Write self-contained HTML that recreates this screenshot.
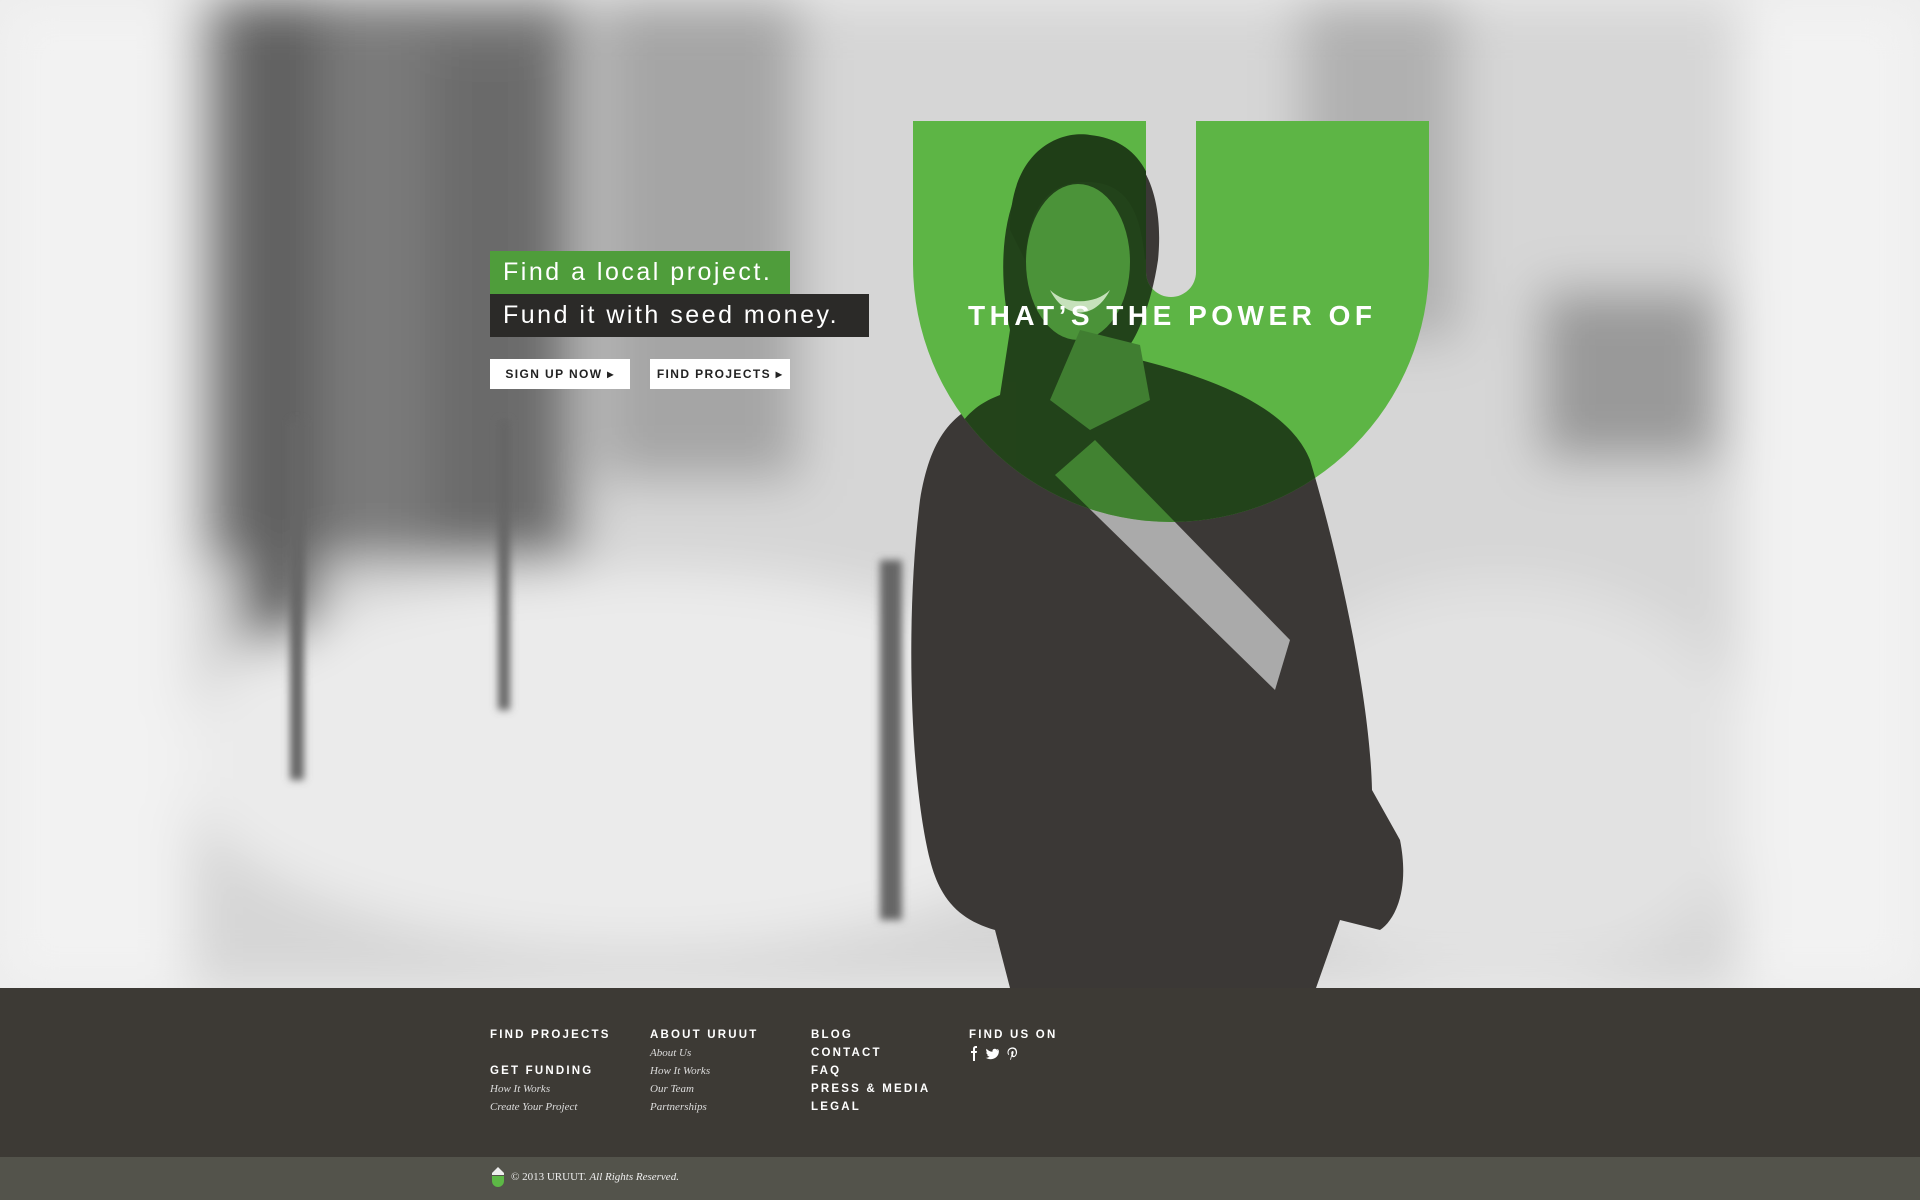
<!DOCTYPE html>
<html><head><meta charset="utf-8"><style>
*{margin:0;padding:0;box-sizing:border-box}
body{width:1920px;height:1200px;overflow:hidden;background:#3d3a35;font-family:"Liberation Sans",sans-serif;position:relative}
#hero{position:absolute;left:0;top:0;width:1920px;height:988px;background:#ececec;overflow:hidden}
.box{position:absolute;left:490px;color:#fff;font-size:25px;letter-spacing:2.5px;padding-left:13px;line-height:43px;white-space:nowrap}
.btn{position:absolute;top:359px;height:30px;background:#fff;color:#222;font-size:12px;font-weight:bold;letter-spacing:1.4px;line-height:30px;text-align:center}
.power{position:absolute;left:968px;top:300px;color:#fff;font-weight:bold;font-size:28px;letter-spacing:4.5px;white-space:nowrap}
.foot{position:absolute;top:988px;left:0;width:1920px;height:169px;background:#3d3a35}
.col{position:absolute;top:1026px;color:#fff}
.h{font-size:11.5px;font-weight:bold;letter-spacing:2.2px;line-height:18px}
.i{font-family:"Liberation Serif",serif;font-style:italic;font-size:11px;line-height:18px;color:#ddd}
.bar{position:absolute;top:1157px;left:0;width:1920px;height:43px;background:#53534b}
</style></head><body>
<div id="hero">
<svg width="1920" height="988" style="position:absolute;left:0;top:0">
<defs>
<filter id="b" x="-20%" y="-20%" width="140%" height="140%"><feGaussianBlur stdDeviation="25"/></filter>
<filter id="b2"><feGaussianBlur stdDeviation="4"/></filter>
<clipPath id="u"><path d="M913 121 L1146 121 L1146 272 A25 25 0 0 0 1196 272 L1196 121 L1429 121 L1429 264 A258 258 0 0 1 913 264 Z"/></clipPath>
</defs>
<g filter="url(#b)">
<rect x="180" y="0" width="1560" height="988" fill="#d6d6d6"/>
<rect x="200" y="0" width="380" height="560" fill="#7a7a7a"/>
<rect x="240" y="0" width="80" height="640" fill="#5e5e5e"/>
<rect x="430" y="40" width="120" height="520" fill="#6a6a6a"/>
<rect x="600" y="0" width="200" height="480" fill="#a5a5a5"/>
<rect x="1300" y="0" width="160" height="340" fill="#b0b0b0"/>
<rect x="1540" y="290" width="180" height="170" fill="#999"/>
<ellipse cx="640" cy="760" rx="460" ry="190" fill="#ebebeb"/>
<ellipse cx="1500" cy="780" rx="260" ry="200" fill="#e2e2e2"/>
<rect x="0" y="0" width="190" height="988" fill="#f2f2f2"/>
<rect x="1740" y="0" width="180" height="988" fill="#f2f2f2"/>
</g>
<g filter="url(#b2)" fill="#666">
<rect x="880" y="560" width="22" height="360"/>
<rect x="290" y="420" width="14" height="360"/>
<rect x="498" y="420" width="12" height="290"/>
</g>
<g>
<path d="M1010 330 C995 260 1000 160 1075 140 C1140 130 1165 190 1158 260 C1152 300 1140 330 1130 345 L1140 360 C1220 380 1290 410 1310 460 C1340 560 1370 700 1372 790 L1400 840 C1410 890 1395 920 1380 930 L1340 920 L1316 988 L1010 988 L995 930 C960 920 940 900 930 860 C910 780 905 620 920 500 C930 440 950 410 1000 395 Z" fill="#3b3836"/>
<path d="M1055 475 L1095 440 L1290 640 L1275 690 Z" fill="#aaa"/>
</g>
<g clip-path="url(#u)">
<rect x="900" y="100" width="540" height="440" fill="#5db545"/>
<g opacity="0.92">
<path d="M1010 330 C995 260 1000 160 1075 140 C1140 130 1165 190 1158 260 C1152 300 1140 330 1130 345 L1140 360 C1220 380 1290 410 1310 460 C1340 560 1370 700 1372 790 L1000 790 C960 700 930 600 940 500 C945 440 960 410 1000 395 Z" fill="#1e3a17"/>
<ellipse cx="1078" cy="262" rx="52" ry="78" fill="#4a9138"/>
<path d="M1080 330 L1140 345 L1150 400 L1090 430 L1050 400 Z" fill="#3e7a30"/>
<path d="M1010 230 C1010 150 1060 130 1090 135 C1140 140 1160 180 1158 240 L1145 260 C1140 200 1120 180 1080 182 C1040 185 1028 220 1025 260 Z" fill="#1a3414"/>
<path d="M1050 290 C1065 320 1095 320 1110 290 C1095 305 1065 305 1050 290Z" fill="#cfe5c6"/>
<path d="M1055 475 L1095 440 L1290 640 L1275 690 Z" fill="#3f7e30"/>
</g>
</g>
</svg>
<div class="box" style="top:251px;width:300px;height:43px;background:#4f9d3b">Find a local project.</div>
<div class="box" style="top:294px;width:379px;height:43px;background:#2b2a28">Fund it with seed money.</div>
<div class="btn" style="left:490px;width:140px">SIGN UP NOW ▸</div>
<div class="btn" style="left:650px;width:140px">FIND PROJECTS ▸</div>
<div class="power">THAT’S THE POWER OF</div>
</div>
<div class="foot"></div>
<div class="col" style="left:490px"><div class="h">FIND PROJECTS</div><div style="height:18px"></div><div class="h">GET FUNDING</div><div class="i">How It Works</div><div class="i">Create Your Project</div></div>
<div class="col" style="left:650px"><div class="h">ABOUT URUUT</div><div class="i">About Us</div><div class="i">How It Works</div><div class="i">Our Team</div><div class="i">Partnerships</div></div>
<div class="col" style="left:811px"><div class="h">BLOG</div><div class="h">CONTACT</div><div class="h">FAQ</div><div class="h">PRESS &amp; MEDIA</div><div class="h">LEGAL</div></div>
<div class="col" style="left:969px"><div class="h">FIND US ON</div>
<svg width="60" height="18" style="display:block;margin-top:1px" fill="#fff">
<path d="M4 16 V8 H2 V6 H4 V4 C4 2 5 1 7 1 H8 V3 H7 C6.3 3 6 3.3 6 4 V6 H8 L7.7 8 H6 V16 Z"/>
<path d="M30 5 C29.4 5.3 28.8 5.4 28.2 5.5 C28.8 5.1 29.3 4.5 29.5 3.9 C28.9 4.2 28.3 4.5 27.6 4.6 C26.4 3.3 24.3 3.6 23.6 5.2 C23.4 5.7 23.4 6.3 23.5 6.8 C21 6.7 18.9 5.5 17.5 3.8 C16.8 5 17.2 6.6 18.3 7.4 C17.9 7.4 17.5 7.3 17.2 7.1 C17.2 8.4 18.1 9.5 19.3 9.8 C18.9 9.9 18.5 9.9 18.1 9.8 C18.5 10.9 19.5 11.6 20.6 11.6 C19.4 12.5 18 12.9 16.6 12.8 C23.7 16.7 30.2 11.9 29.9 5.9 Z"/>
<path d="M41 15 L42.5 9.5 C42 8 42.3 6 43.7 6 C45.2 6 44.5 8.4 44 9.6 C43.6 10.8 45 11.3 45.8 10.5 C47.5 9 47.3 4 43.6 3.8 C39.8 3.6 38.6 7.7 40.2 9.4 L39.6 10 C37.5 8.6 38.2 2.4 43.8 2.4 C48.5 2.5 49.3 8.5 46.3 11.4 C45 12.6 43.2 12.2 42.8 11.2 L42 14.5 Z"/>
</svg></div>
<div class="bar"></div>
<svg style="position:absolute;left:490px;top:1167px" width="16" height="20"><path d="M8 0 L14 6 L14 8 L2 8 L2 6 Z" fill="#eee"/><path d="M2 9 L14 9 L14 14 A6 6 0 0 1 2 14 Z" fill="#5db846"/></svg>
<div style="position:absolute;left:511px;top:1171px;color:#eee;font-family:'Liberation Serif',serif;font-size:11px">© 2013 URUUT. <i>All Rights Reserved.</i></div>
</body></html>
